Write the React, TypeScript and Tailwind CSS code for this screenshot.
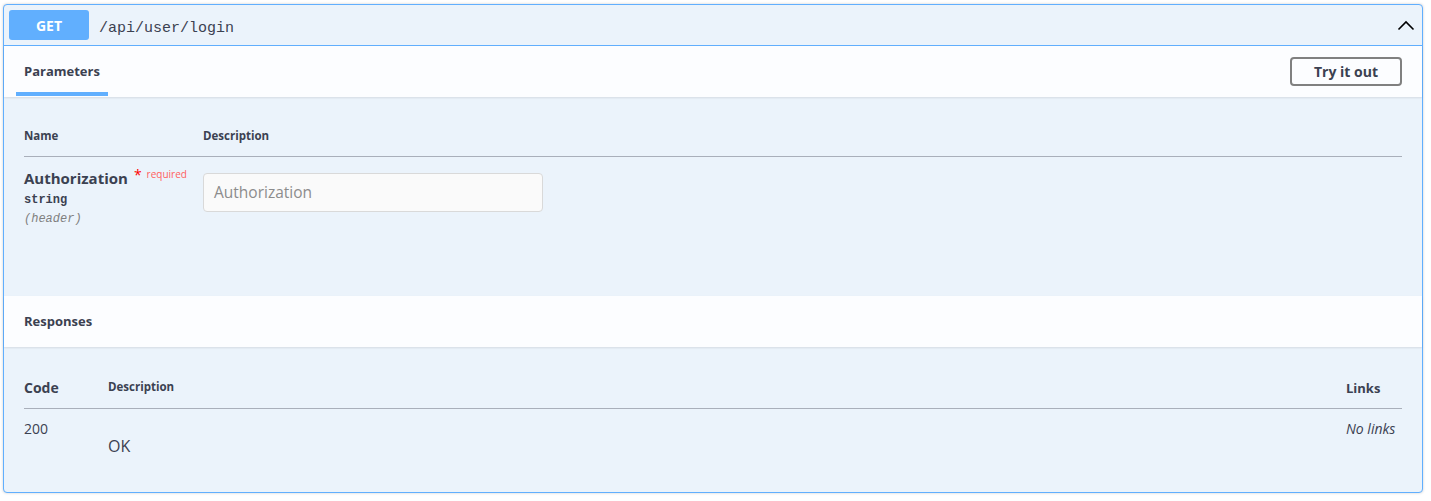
import React from "react";

const sans = { fontFamily: '"Open Sans", "Noto Sans", sans-serif' } as const;
const mono = { fontFamily: '"Liberation Mono", "DejaVu Sans Mono", monospace' } as const;

function Chevron() {
  return (
    <svg width="20" height="20" viewBox="0 0 20 20" className="block">
      <path d="M2.5 14.5 L10 7 L17.5 14.5" fill="none" stroke="#000" strokeWidth="1.6" />
    </svg>
  );
}

export default function App() {
  return (
    <div className="min-h-[501px] bg-white pt-[4px] pl-[3px] pr-[8px] text-[#3b4151]" style={sans}>
      <div className="rounded-[4px] border border-[#61affe] bg-[#ebf3fb] shadow-[0_0_3px_rgba(0,0,0,0.19)]">
        {/* header */}
        <div className="flex h-[41px] items-center border-b border-[#61affe] pl-[5px] pr-[6px]">
          <div className="flex h-[30px] w-[80px] items-center justify-center rounded-[3px] bg-[#61affe] text-[14px] font-bold text-white">
            GET
          </div>
          <div className="ml-[10px] pt-[7px] text-[15px] leading-[20px] text-[#3b4151]" style={mono}>
            /api/user/login
          </div>
          <div className="ml-auto">
            <Chevron />
          </div>
        </div>

        {/* parameters tab header */}
        <div className="flex h-[51px] items-center bg-[#fcfdff] pl-[12px] pr-[20px] shadow-[0_1px_2px_rgba(0,0,0,0.1)]">
          <div className="relative flex h-full items-center px-[8px]">
            <span className="text-[13px] font-bold">Parameters</span>
            <div className="absolute bottom-[1px] left-0 right-0 h-[4px] bg-[#61affe]" />
          </div>
          <button className="ml-auto h-[29px] w-[112px] rounded-[4px] border-2 border-[#808080] bg-transparent text-[14px] font-bold text-[#3b4151]">
            Try it out
          </button>
        </div>

        {/* parameters body */}
        <div className="h-[199px] px-[20px] pt-[30px]">
          <div className="flex h-[30px] items-start border-b border-[#a9afba] text-[11.5px] font-bold leading-[18px]">
            <div className="w-[179px]">Name</div>
            <div>Description</div>
          </div>
          <div className="flex pt-[11px]">
            <div className="w-[179px]">
              <div className="flex items-start">
                <span className="text-[15px] font-bold leading-[20px]">Authorization</span>
                <span className="ml-[6px] text-[14px] leading-[14px] text-[#ff0000]">*</span>
                <span className="ml-[5px] text-[10px] leading-[12px] text-[#ff6060]">required</span>
              </div>
              <div className="mt-[3px] text-[12px] font-bold leading-[19px]" style={mono}>
                string
              </div>
              <div className="text-[12px] italic leading-[19px] text-[#808080]" style={mono}>
                (header)
              </div>
            </div>
            <div className="pt-[5px]">
              <div className="flex h-[39px] w-[340px] items-center rounded-[4px] border border-[#d9d9d9] bg-[#fafafa] px-[10px] text-[15.5px] text-[#8c8c8c]">
                Authorization
              </div>
            </div>
          </div>
        </div>

        {/* responses header */}
        <div className="flex h-[51px] items-center bg-[#fcfdff] px-[20px] shadow-[0_1px_2px_rgba(0,0,0,0.1)]">
          <span className="text-[13px] font-bold">Responses</span>
        </div>

        {/* responses body */}
        <div className="h-[145px] px-[20px] pt-[31px]">
          <div className="flex h-[31px] items-start border-b border-[#a9afba] font-bold">
            <div className="w-[84px] text-[14px] leading-[20px]">Code</div>
            <div className="text-[11.5px] leading-[18px]">Description</div>
            <div className="ml-auto w-[56px] text-[13px] leading-[20px]">Links</div>
          </div>
          <div className="flex pt-[10px]">
            <div className="w-[84px] text-[14px] leading-[20px]">200</div>
            <div className="pt-[17px] text-[16px] leading-[20px]">OK</div>
            <div className="ml-auto w-[56px] text-[14px] italic leading-[20px]">No links</div>
          </div>
        </div>
      </div>
    </div>
  );
}
